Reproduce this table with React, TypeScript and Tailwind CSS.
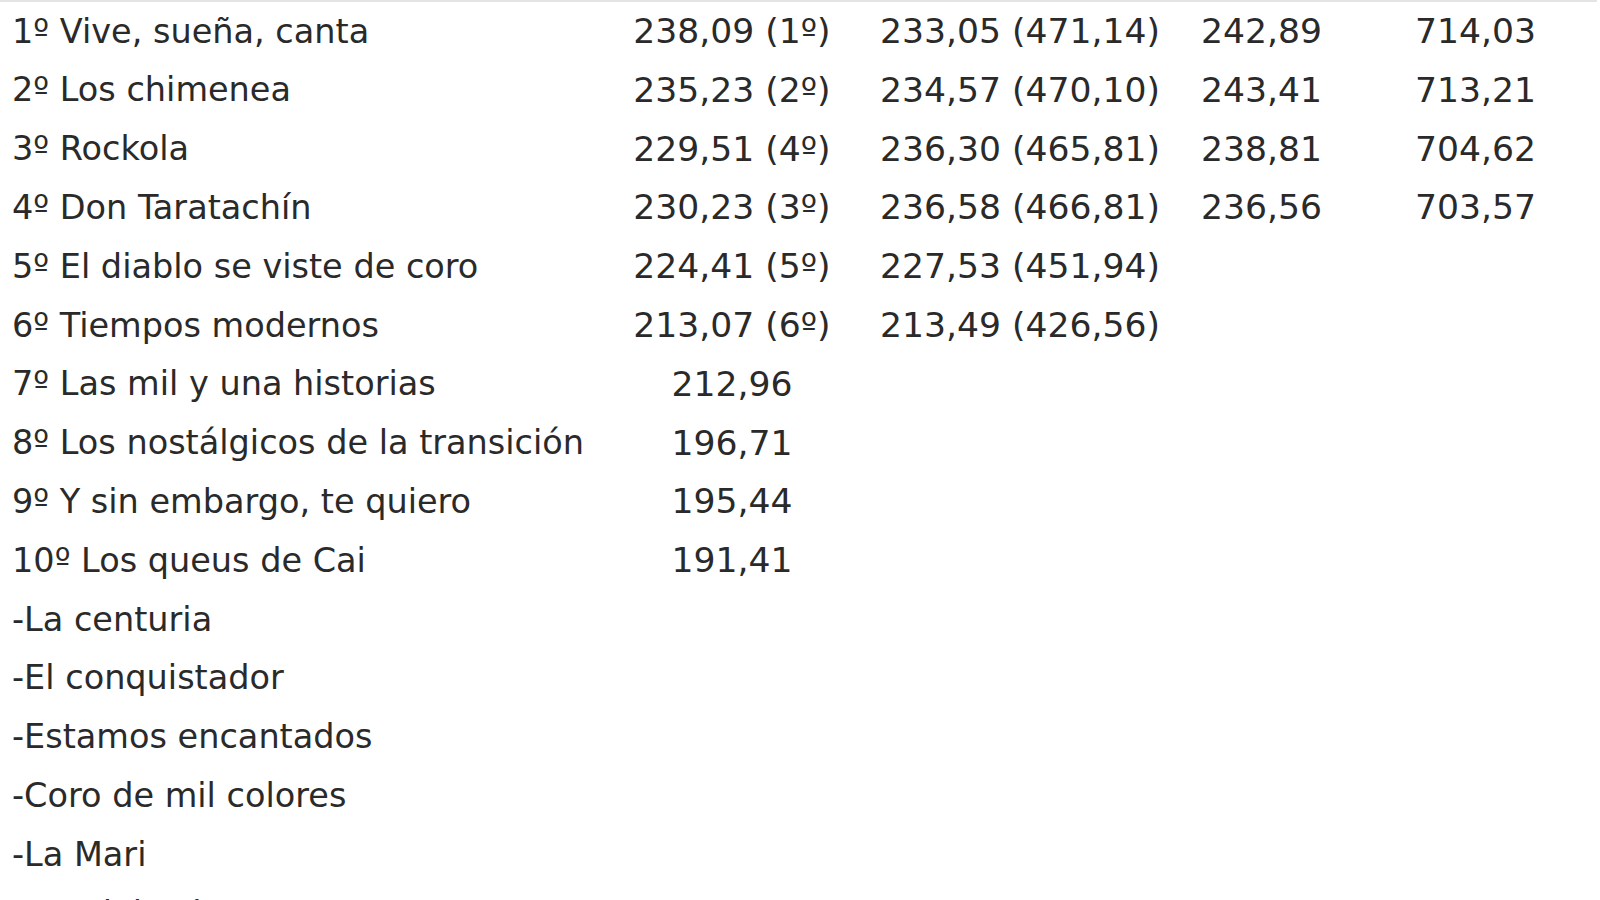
import React from "react";

type Row = [string, string, string, string, string];

const rows: Row[] = [
  ["1º Vive, sueña, canta", "238,09 (1º)", "233,05 (471,14)", "242,89", "714,03"],
  ["2º Los chimenea", "235,23 (2º)", "234,57 (470,10)", "243,41", "713,21"],
  ["3º Rockola", "229,51 (4º)", "236,30 (465,81)", "238,81", "704,62"],
  ["4º Don Taratachín", "230,23 (3º)", "236,58 (466,81)", "236,56", "703,57"],
  ["5º El diablo se viste de coro", "224,41 (5º)", "227,53 (451,94)", "", ""],
  ["6º Tiempos modernos", "213,07 (6º)", "213,49 (426,56)", "", ""],
  ["7º Las mil y una historias", "212,96", "", "", ""],
  ["8º Los nostálgicos de la transición", "196,71", "", "", ""],
  ["9º Y sin embargo, te quiero", "195,44", "", "", ""],
  ["10º Los queus de Cai", "191,41", "", "", ""],
  ["-La centuria", "", "", "", ""],
  ["-El conquistador", "", "", "", ""],
  ["-Estamos encantados", "", "", "", ""],
  ["-Coro de mil colores", "", "", "", ""],
  ["-La Mari", "", "", "", ""],
  ["-Los del Pelo", "", "", "", ""],
];

export default function App() {
  return (
    <div
      className="w-[1600px] h-[900px] overflow-hidden bg-white text-[#2a2a2a]"
      style={{ fontFamily: '"DejaVu Sans", Verdana, sans-serif' }}
    >
      <div className="border-t-2 border-[#e4e4e4] mr-[3px]">
        {rows.map((r, i) => (
          <div
            key={i}
            className="grid grid-cols-[620px_224px_336px_210px_207px] h-[58.8px] items-center leading-none whitespace-nowrap"
          >
            <div className="pl-[12px] text-[33.5px]">{r[0]}</div>
            <div className="text-center text-[34.6px]">{r[1]}</div>
            <div className="pl-[36px] text-[34.6px]">{r[2]}</div>
            <div className="pl-[21px] text-[34.6px]">{r[3]}</div>
            <div className="pl-[25px] text-[34.6px]">{r[4]}</div>
          </div>
        ))}
      </div>
    </div>
  );
}
